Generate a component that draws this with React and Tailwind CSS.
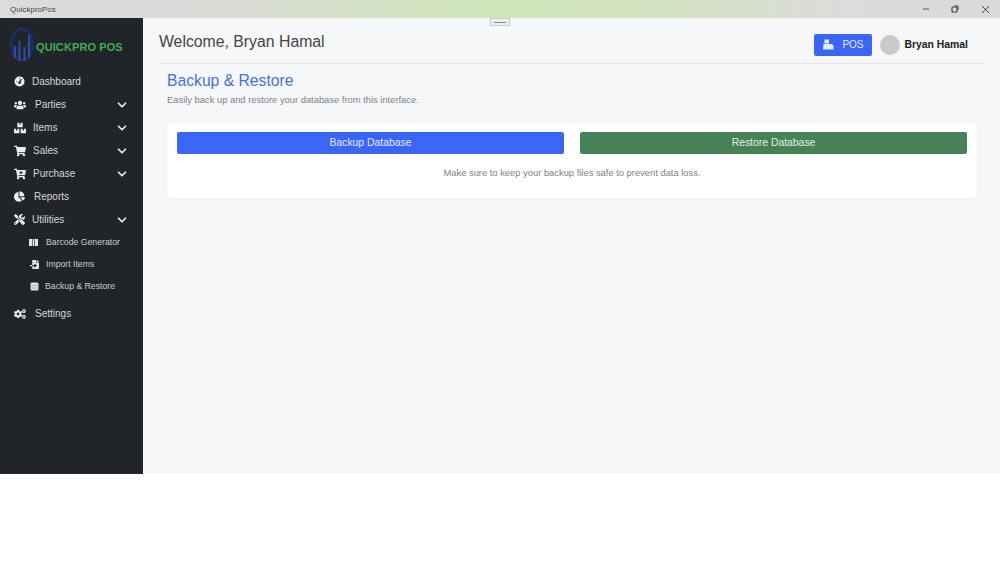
import React from "react";
import { FaUsers, FaBoxes, FaShoppingCart, FaCartPlus, FaChartPie, FaTools, FaFileImport, FaCogs } from "react-icons/fa";
import { FiChevronDown } from "react-icons/fi";

const font = { fontFamily: '"Liberation Sans", Arial, sans-serif' };

function GaugeIcon({ className }) {
  return (
    <svg viewBox="0 0 12 12" className={className}>
      <circle cx="6" cy="6" r="5.5" fill="currentColor" />
      <path d="M6 7L8.2 3.4" stroke="#212529" strokeWidth="1.4" />
      <circle cx="6" cy="7.4" r="1.4" fill="#212529" />
      <path d="M2.4 6h1M6 2.2v1" stroke="#212529" strokeWidth="0.9" />
    </svg>
  );
}

function BarcodeIcon({ className }) {
  return (
    <svg viewBox="0 0 9 9" className={className}>
      <path d="M0 1h3v7H0zM3.6 1h1.6v7H3.6zM5.8 1H9v7H5.8z" fill="currentColor" />
    </svg>
  );
}

function DbIcon({ className }) {
  return (
    <svg viewBox="0 0 9 9" className={className}>
      <rect x="0.5" y="0.5" width="8" height="8" rx="1.5" fill="currentColor" />
      <path d="M0.5 3.4h8M0.5 6h8" stroke="#7f8285" strokeWidth="0.5" />
    </svg>
  );
}

function PosIcon({ className }) {
  return (
    <svg viewBox="0 0 11 11" className={className}>
      <path d="M1.5 0.5h4.5v4H1.5z" fill="currentColor" />
      <path d="M0.5 5h8l2 1.5V10.5h-10.5z" fill="currentColor" />
    </svg>
  );
}

function NavItem({ icon: Icon, label, chevron, gap, iconSize = "w-[12px] h-[12px]" }) {
  return (
    <div className="flex items-center h-[23px] pl-[14px] pr-[14px] text-[#d5d7da]">
      <Icon className={`${iconSize} shrink-0 text-[#eceef0]`} />
      <span className={`text-[10px] ${gap}`}>{label}</span>
      {chevron && <FiChevronDown className="ml-auto w-[14px] h-[14px] text-[#e8eaec]" strokeWidth={3} />}
    </div>
  );
}

function SubItem({ icon: Icon, label, gap, pl }) {
  return (
    <div className={`flex items-center h-[21.7px] ${pl} text-[#c9cbce]`}>
      <Icon className="w-[9px] h-[9px] shrink-0 text-[#e2e4e6]" />
      <span className={`text-[8.7px] ${gap}`}>{label}</span>
    </div>
  );
}

function Logo() {
  return (
    <div className="flex items-center h-[53px] pl-[10px]">
      <svg width="24" height="35" viewBox="0 0 24 35" className="shrink-0">
        <ellipse cx="12" cy="17.5" rx="10.5" ry="15.5" fill="none" stroke="#1e2f6e" strokeWidth="2.5" />
        <path d="M5 31V19M9.5 34V14M14.5 34V20M19 31V8" stroke="#2e4ca8" strokeWidth="2" fill="none" />
      </svg>
      <span className="ml-[2px] mt-[5px] text-[11px] font-bold tracking-[0.1px] text-[#3fae5a] whitespace-nowrap">QUICKPRO POS</span>
    </div>
  );
}

export default function App() {
  return (
    <div className="w-[1000px] h-[562px] bg-white overflow-hidden flex flex-col" style={font}>
      <div className="relative h-[18px] shrink-0 flex items-center bg-[linear-gradient(90deg,#dcdcdc_0%,#d9dad6_22%,#cfe6b8_50%,#d5e2c4_68%,#dcdcdc_85%,#d9d9d9_100%)]">
        <span className="ml-[10px] mt-[1px] text-[8px] text-[#444]">QuickproPos</span>
        <div className="ml-auto flex items-center text-[#333]">
          <svg width="8" height="8" viewBox="0 0 8 8" className="mr-[21px]"><path d="M1 4h6" stroke="#555" strokeWidth="1" /></svg>
          <svg width="8" height="8" viewBox="0 0 8 8" className="mr-[22px]"><rect x="1" y="2" width="5" height="5" rx="1" fill="none" stroke="#444" strokeWidth="1.2" /><path d="M3 1h4v4" fill="none" stroke="#444" strokeWidth="1" /></svg>
          <svg width="9" height="9" viewBox="0 0 9 9" className="mr-[10px]"><path d="M1 1l7 7M8 1l-7 7" stroke="#444" strokeWidth="1" /></svg>
        </div>
      </div>
      <div className="flex h-[456px] shrink-0">
        <aside className="w-[143px] shrink-0 bg-[#212529] flex flex-col">
          <Logo />
          <div className="flex flex-col mt-[-1px]">
            <NavItem icon={GaugeIcon} iconSize="w-[11px] h-[11px]" label="Dashboard" gap="ml-[7px]" />
            <NavItem icon={FaUsers} label="Parties" chevron gap="ml-[9px]" />
            <NavItem icon={FaBoxes} label="Items" chevron gap="ml-[7px]" />
            <NavItem icon={FaShoppingCart} label="Sales" chevron gap="ml-[7px]" />
            <NavItem icon={FaCartPlus} label="Purchase" chevron gap="ml-[7px]" />
            <NavItem icon={FaChartPie} iconSize="w-[11px] h-[11px]" label="Reports" gap="ml-[9px]" />
            <NavItem icon={FaTools} iconSize="w-[11px] h-[11px]" label="Utilities" chevron gap="ml-[7px]" />
          </div>
          <div className="flex flex-col mt-[1px]">
            <SubItem icon={BarcodeIcon} label="Barcode Generator" pl="pl-[29px]" gap="ml-[8px]" />
            <SubItem icon={FaFileImport} label="Import Items" pl="pl-[30px]" gap="ml-[7px]" />
            <SubItem icon={DbIcon} label="Backup & Restore" pl="pl-[30px]" gap="ml-[6px]" />
          </div>
          <div className="mt-[5px]">
            <NavItem icon={FaCogs} label="Settings" gap="ml-[9px]" />
          </div>
        </aside>
        <main className="relative flex-1 bg-[#f6f7f9] px-[16px]">
          <div className="absolute left-[347px] top-0 w-[20px] h-[8px] bg-[#eceef0] border border-[#c8cace] flex items-center justify-center">
            <div className="w-[12px] h-[1px] bg-[#888]" />
          </div>
          <header className="flex items-center h-[46px] border-b border-[#e4e6e9]">
            <h1 className="mt-[2px] text-[15.8px] text-[#444]">Welcome, Bryan Hamal</h1>
            <div className="ml-auto flex items-center mt-[8px] mr-[16px]">
              <button className="flex items-center justify-center w-[58px] h-[22px] bg-[#3b65f5] rounded-[2px] text-[#e6ecff] text-[10px]">
                <PosIcon className="w-[11px] h-[11px] text-[#e6ecff] mr-[8px]" />POS
              </button>
              <div className="ml-[8px] w-[20px] h-[20px] rounded-full bg-[#c9c9c9]" />
              <span className="ml-[4px] text-[10.4px] font-bold text-[#1c1c1c]">Bryan Hamal</span>
            </div>
          </header>
          <section className="pl-[8px] pr-[7px]">
            <h2 className="mt-[7px] text-[15.7px] leading-[20px] text-[#4570dd]">Backup &amp; Restore</h2>
            <p className="mt-[3px] text-[9.37px] leading-[12px] text-[#7d8288]">Easily back up and restore your database from this interface.</p>
            <div className="mt-[17px] h-[75px] bg-white rounded-[3px] shadow-[0_1px_3px_rgba(0,0,0,0.05)] px-[10px] pt-[9px]">
              <div className="flex gap-[16px]">
                <button className="flex-1 h-[22px] bg-[#3b65f5] rounded-[2px] text-[#e6ecff] text-[10.4px]">Backup Database</button>
                <button className="flex-1 h-[22px] bg-[#478257] rounded-[2px] text-[#e4efe7] text-[10.4px]">Restore Database</button>
              </div>
              <p className="mt-[13px] text-center text-[9.37px] leading-[12px] text-[#7d8288]">Make sure to keep your backup files safe to prevent data loss.</p>
            </div>
          </section>
        </main>
      </div>
    </div>
  );
}
